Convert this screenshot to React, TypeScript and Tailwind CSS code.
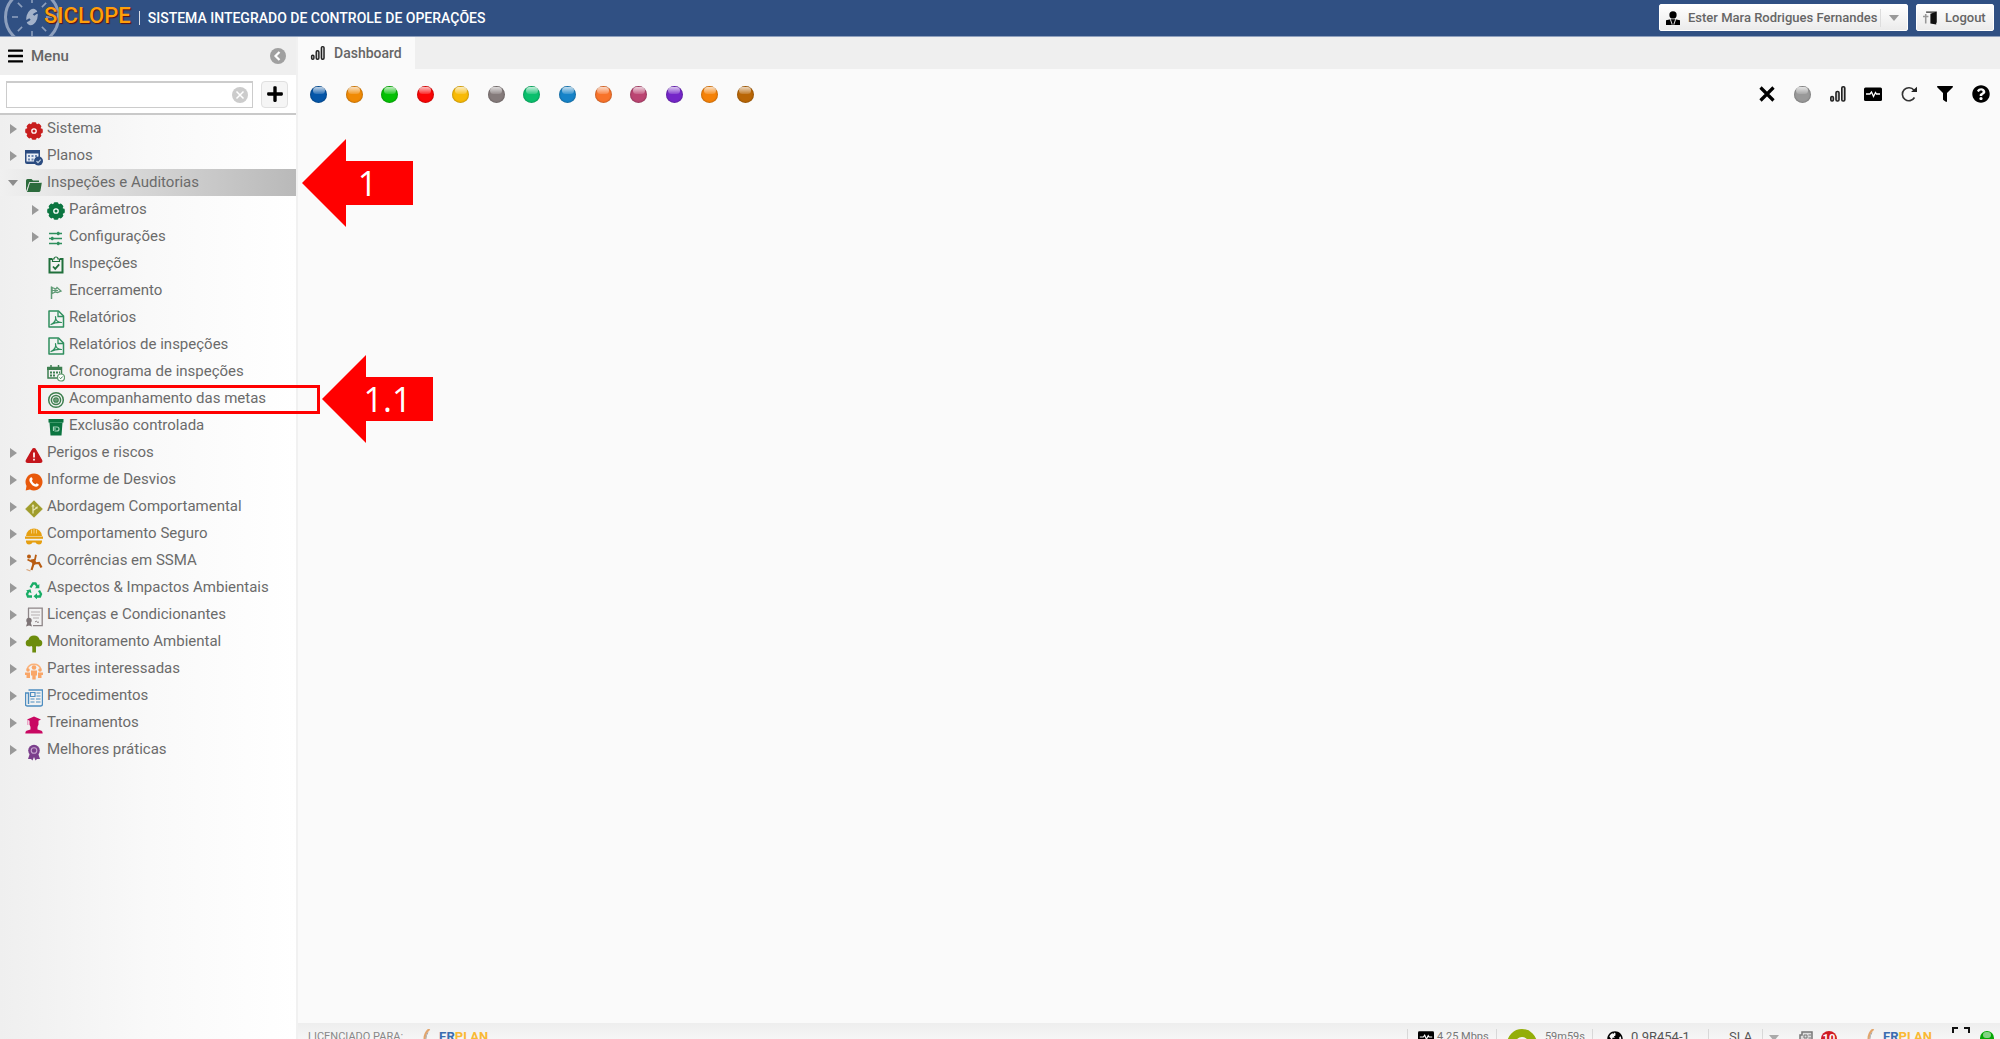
import { type ReactNode } from 'react';
import { FaPlus, FaFilter, FaQuestionCircle, FaBars, FaGlobeAmericas } from 'react-icons/fa';

/* ---------- Icons ---------- */

function Icon({ children, className = 'h-[18px] w-[18px]' }: { children: ReactNode; className?: string }) {
  return (
    <svg className={`shrink-0 ${className}`} viewBox="0 0 18 18" fill="none" aria-hidden>
      {children}
    </svg>
  );
}

function GearIcon({ color }: { color: string }) {
  return (
    <Icon>
      <g fill={color}>
        <circle cx="9" cy="9" r="7.4" />
        {[0, 45, 90, 135].map((angle) => (
          <rect key={angle} x="6.6" y="0.2" width="4.8" height="17.6" rx="1.4" transform={`rotate(${angle} 9 9)`} />
        ))}
      </g>
      <circle cx="9" cy="9" r="2.2" stroke="#fff" strokeWidth="1.3" />
    </Icon>
  );
}

function PlansIcon() {
  return (
    <Icon>
      <path d="M0 1h15v14H2a2 2 0 0 1-2-2z" fill="#2b4b80" />
      <path d="M1.5 4.5h12v8h-12z" fill="#e9eef6" />
      <path d="M3 6h2v2H3zM6.5 6h2v2h-2zM10 6h2v2h-2zM3 9.5h2v2H3zM6.5 9.5h2v2h-2z" fill="#6c86b0" />
      <circle cx="13.5" cy="12" r="4.5" fill="#2b4b80" />
      <path d="M11.5 12l1.5 1.6 2.8-3" stroke="#bcd" strokeWidth="1.2" />
    </Icon>
  );
}

function FolderIcon() {
  return (
    <Icon>
      <path d="M1 15.5V4.5Q1 3 2.5 3h4L8 4.5h6V6H4.5z" fill="#2c6b3c" />
      <path d="M2 16L4.8 6.8h12L15.5 14.500q-.3 1.500-1.800 1.500z" fill="#2c6b3c" />
      <path d="M2 15L4.500 6.500h11" stroke="#dcdcdc" strokeWidth=".7" />
    </Icon>
  );
}

function SlidersIcon() {
  return (
    <Icon>
      <g stroke="#2f8f5e" strokeWidth="1.5">
        <path d="M2 4.5h13M2 9.5h13M2 14.5h13" />
      </g>
      <g fill="#2f8f5e">
        <rect x="10" y="2.7" width="2.5" height="3.6" rx="1" />
        <rect x="4" y="7.7" width="2.5" height="3.6" rx="1" />
        <rect x="10" y="12.7" width="2.5" height="3.6" rx="1" />
      </g>
    </Icon>
  );
}

function ClipboardIcon() {
  return (
    <Icon>
      <path d="M5 3H2.5v13.5h13V3H13" stroke="#20703c" strokeWidth="2" />
      <path d="M5.500 5.500h7V3H11a2 2 0 0 0-4 0H5.500z" stroke="#20703c" strokeWidth="1.2" />
      <path d="M6 10.500l2.200 2.300 4-4.500" stroke="#20703c" strokeWidth="1.800" />
    </Icon>
  );
}

function FlagIcon() {
  return (
    <Icon>
      <path d="M4.500 3.500v12.500" stroke="#5f9a75" strokeWidth="1.500" />
      <path d="M5 4.500l4 1.500 1-1.500 4 3.500-3.500 1.500L8.500 9 5 10.500z" stroke="#5f9a75" strokeWidth="1.300" />
      <path d="M5 7.500h6M8 5.500V9" stroke="#5f9a75" />
    </Icon>
  );
}

function PdfIcon() {
  return (
    <Icon>
      <path d="M2 1h9.500L16.500 6v11h-14.500z" stroke="#2f8f5e" strokeWidth="1.500" strokeLinejoin="round" />
      <path d="M11 1.500V6.500h5" stroke="#2f8f5e" strokeWidth="1.300" />
      <path d="M4 14.500c4-2 5-5.500 4.500-8 0 4 2.500 6 6 6-3-.5-6.500 0-10.500 2z" stroke="#2f8f5e" strokeWidth="1.200" strokeLinejoin="round" />
    </Icon>
  );
}

function CalendarIcon() {
  return (
    <Icon>
      <path d="M1 3.500h13.500v10.500H1z" stroke="#3d7f50" strokeWidth="1.500" />
      <path d="M0 3h15v3H0z" fill="#3d7f50" />
      <path d="M4 1v3M11.500 1v3" stroke="#3d7f50" strokeWidth="1.500" />
      <path d="M3 8.500h10M3 11.500h6" stroke="#3d7f50" strokeWidth="1.800" strokeDasharray="2 1" />
      <circle cx="14" cy="13.500" r="3.500" fill="#fff" stroke="#5f9a6d" strokeWidth="1.200" />
      <path d="M12.500 13.500l1.200 1.200 2-2.200" stroke="#3d7f50" />
    </Icon>
  );
}

function TargetIcon() {
  return (
    <Icon>
      <g stroke="#3f8050" strokeWidth="1.500">
        <circle cx="9" cy="9" r="7.300" />
        <circle cx="9" cy="9" r="4.600" />
        <circle cx="9" cy="9" r="2.100" />
      </g>
      <circle cx="9" cy="9" r="1" fill="#3f8050" />
    </Icon>
  );
}

function BinIcon() {
  return (
    <Icon>
      <path d="M1.500 1h15v3.500h-1L14.500 17.500h-11l-1-13h-1z" fill="#0b7540" />
      <path d="M3 4.500h12" stroke="#4aa275" strokeWidth=".8" />
      <path d="M6.500 13V9h3.500a2 2 0 0 1 0 4H7.500M9 11H6" stroke="#a8d6bd" strokeWidth="1.200" />
    </Icon>
  );
}

function WarningIcon() {
  return (
    <Icon>
      <path d="M9 2.800q1 0 1.500 1l6 10.500q.8 2-1.500 2H3q-2.300 0-1.500-2l6-10.500q.5-1 1.500-1z" fill="#c4161c" stroke="#c4161c" strokeWidth="1.500" strokeLinejoin="round" />
      <path d="M9 6.500v5M9 12.800v1.800" stroke="#fff" strokeWidth="1.700" />
    </Icon>
  );
}

function PhoneIcon() {
  return (
    <Icon>
      <path d="M9 .5a8.500 8.500 0 1 1-4 16L.7 17.500 1.500 13A8.500 8.500 0 0 1 9 .5z" fill="#e8590c" />
      <path d="M5.300 4.800c1-1 1.700-.5 2.200 1 .5 1.200-.8 1.600-.5 2.200.8 1.500 1.800 2.500 3.200 3.200.7.300 1-1.100 1.900-.8 1.700.7 2.200 1.200 1.200 2.300-2 2-4.800.6-6.600-1.300-2-2-3.300-4.700-1.400-6.600z" fill="#fff" />
    </Icon>
  );
}

function DiamondIcon() {
  return (
    <Icon>
      <path d="M9 .8L17.300 9 9 17.200.7 9z" fill="#a09d2c" stroke="#a09d2c" strokeLinejoin="round" />
      <path d="M8 13.500V5.500M8 10.500l3.500-2.500" stroke="#e6e4b0" strokeWidth="1.300" />
      <path d="M6.300 6.500L8 4l1.700 2.500zM10 7l3-.5-.8 2.800z" fill="#e6e4b0" />
    </Icon>
  );
}

function HelmetIcon() {
  return (
    <Icon>
      <path d="M1 9a8 7.500 0 0 1 16 0z" fill="#e69f10" />
      <path d="M6.500 2.500v4M9 1.500v5M11.500 2.500v4" stroke="#f7d58a" strokeWidth=".9" />
      <path d="M0 9.500h18v2.300H0z" fill="#e69f10" />
      <path d="M1 13.500h16v1.500q-.5 2.500-3 2.500-2.500 0-3.500-2h-3q-1 2-3.500 2T1 15z" fill="#e69f10" />
    </Icon>
  );
}

function FallingIcon() {
  return (
    <Icon>
      <circle cx="4" cy="2.500" r="2" fill="#b85c12" />
      <path d="M2.500 5.500L6.500 7.500 10 5.500 11 .8" stroke="#b85c12" strokeWidth="1.800" />
      <path d="M5.500 5.500l4.500-.5 1.500 4.500-3.500 2z" fill="#b85c12" />
      <path d="M8.500 10L6.500 16M9 9.500l5-.5 2.500 4.500" stroke="#b85c12" strokeWidth="2.200" />
      <path d="M1.500 15.500l4 1.500" stroke="#d9a57a" strokeWidth="1.300" />
    </Icon>
  );
}

function RecycleIcon() {
  return (
    <Icon>
      <g stroke="#18ad66" strokeWidth="2.300" fill="none">
        <path d="M5.500 6.500L8 2.500h2.500l2 3.500" />
        <path d="M14 9.500l2 3.500-1 2.500h-4.500" />
        <path d="M7 15.500H3L2 13l2-3.500" />
      </g>
      <g fill="#18ad66">
        <path d="M9.800 7.300h4.500V3z" />
        <path d="M12 12.300v6l-3.500-3z" />
        <path d="M1 9.500l4.500-1.300 1 4z" />
      </g>
    </Icon>
  );
}

function LicenseIcon() {
  return (
    <Icon className="h-5 w-[18px]">
      <path d="M3.500 0v11M3 .2h14.200v17.500H8" stroke="#8d8587" strokeWidth="1.300" />
      <path d="M6 4h9M6 7h9M8 10h6" stroke="#b5afb0" strokeWidth="1" />
      <path d="M10 14l1.500-1 1 1.500 1.500-.5" stroke="#8d8587" />
      <circle cx="4" cy="12.500" r="2.700" fill="#7d7476" />
      <path d="M2.500 14L1 18.500l3-1 3 1L5.500 14z" fill="#7d7476" />
    </Icon>
  );
}

function TreeIcon() {
  return (
    <Icon>
      <g fill="#6c8c0c">
        <ellipse cx="9" cy="5" rx="5.500" ry="4.500" />
        <ellipse cx="4.500" cy="8" rx="3.800" ry="3.500" />
        <ellipse cx="13.500" cy="8" rx="3.800" ry="3.500" />
        <path d="M5 8h8l-2 4v5.500H7.300V12z" />
      </g>
    </Icon>
  );
}

function PeopleIcon() {
  return (
    <Icon>
      <path d="M2 7.500a7.300 7.300 0 0 1 14 0" stroke="#fbb27a" strokeWidth="1.500" />
      <g fill="#f9a668">
        <circle cx="9" cy="5.500" r="2.300" />
        <path d="M6 8.500h6v5h-1.300V17.500H7.300v-4H6z" />
        <circle cx="3" cy="8" r="1.800" />
        <circle cx="15" cy="8" r="1.800" />
        <path d="M0 10.500h5V16H1.500v-3H0zM13 10.500h5v2.500h-1.500v3H13z" />
      </g>
    </Icon>
  );
}

function NewspaperIcon() {
  return (
    <Icon>
      <path d="M3.500 1h14v14q0 2-2 2h-13q-2 0-2-2V4h3v11" stroke="#4d8dc0" strokeWidth="1.400" />
      <path d="M5.500 3.500h4.500v4H5.500z" stroke="#4d8dc0" strokeWidth="1.200" />
      <path d="M11.500 4h4M11.500 7h4M5.500 10h4M11 10h4.500M5.500 13h4M11 13h4.500" stroke="#4d8dc0" strokeWidth="1.200" />
    </Icon>
  );
}

function GraduateIcon() {
  return (
    <Icon>
      <g fill="#c90862">
        <path d="M9 .5l7 3-2.500 1.300v4q-1 3-4.500 3t-4.500-3v-4L2 3.500z" />
        <path d="M5.500 9.500h7v4l4 1.200q1.200.5 1.200 2.800H.3q0-2.300 1.200-2.800l4-1.200z" />
      </g>
      <path d="M2.800 4v5" stroke="#e889b5" />
    </Icon>
  );
}

function MedalIcon() {
  return (
    <Icon>
      <path d="M5 10L3 16h3l1.500 1.500L9 14l1.500 3.500L12 16h3l-2-6z" fill="#7b3f8c" />
      <circle cx="9" cy="7.500" r="5.800" fill="#7b3f8c" />
      <circle cx="9" cy="7.500" r="2.800" stroke="#c7a5d0" strokeWidth="1.100" />
    </Icon>
  );
}

function BarsChartIcon({ className = 'h-[18px] w-[18px]' }: { className?: string }) {
  return (
    <Icon className={className}>
      <g fill="#ccc" stroke="#222" strokeWidth="1.600">
        <rect x="1.800" y="11.500" width="2.600" height="4.500" rx="1.200" />
        <rect x="7" y="6.500" width="3" height="9.500" rx="1.300" />
        <rect x="12.800" y="1.800" width="3" height="14.200" rx="1.300" />
      </g>
    </Icon>
  );
}

function PulseIcon({ className = 'h-[18px] w-[18px]' }: { className?: string }) {
  return (
    <Icon className={className}>
      <rect x="0" y="2.500" width="18" height="13.500" rx="1.500" fill="#000" />
      <path d="M2 9h4l1.500-2 2 4.500 2-4 1 1.500H16" stroke="#fff" strokeWidth="1.300" />
    </Icon>
  );
}

function CrossIcon() {
  return (
    <Icon>
      <path d="M2.500 2.500l13 13M15.500 2.500l-13 13" stroke="#000" strokeWidth="3.200" />
    </Icon>
  );
}

function RefreshIcon() {
  return (
    <Icon>
      <path d="M14.500 12.500A6.500 6.500 0 1 1 14 5.200" stroke="#333" strokeWidth="1.600" />
      <path d="M11 7h6V1.800z" fill="#222" />
    </Icon>
  );
}

function UserIcon() {
  return (
    <Icon className="h-4 w-3.5">
      <circle cx="9" cy="5" r="4.700" fill="#000" />
      <path d="M0 12l6-1.500h6L18 12v6H0z" fill="#000" />
      <path d="M5.500 10.500L8 17.500M12.500 10.500L10 17.500" stroke="#ddd" strokeWidth="1.300" />
    </Icon>
  );
}

function DoorIcon() {
  return (
    <Icon className="h-4 w-3.5">
      <path d="M4 1.500h13V15" stroke="#333" strokeWidth="1.500" />
      <path d="M9.500 3.500L17 1v16.500l-7.500-1.500z" fill="#111" />
      <path d="M0 7h7M3.500 4v12" stroke="#999" strokeWidth="2" />
    </Icon>
  );
}

function SiclopeLogo() {
  return (
    <svg className="absolute -top-3 left-1 h-[58px] w-[58px]" viewBox="0 0 58 58" fill="none" aria-hidden>
      <g stroke="#8d9fbd">
        <circle cx="28" cy="29" r="26.500" strokeWidth="3" />
        {[0, 45, 90, 135, 180, 225, 270, 315].map((angle) => (
          <path key={angle} d="M28 9v6" strokeWidth="1.600" transform={`rotate(${angle} 28 29)`} />
        ))}
      </g>
      <ellipse cx="28" cy="29" rx="5.500" ry="8.500" fill="#a3b2ca" transform="rotate(18 28 29)" />
      <path d="M38 24.500q-6-.5-8.500 2.500M17 33.500q6 .5 9-2.500" stroke="#305083" strokeWidth="2" />
    </svg>
  );
}

function ErplanLogo() {
  return (
    <span className="flex items-start gap-2 text-[13px] leading-4 font-bold">
      <svg className="h-4 w-2" viewBox="0 0 8 16" fill="none" aria-hidden>
        <path d="M6.500 0Q-1 6 3 16" stroke="#e2a56c" strokeWidth="2.200" />
        <path d="M5 3.500Q1 9 5 16" stroke="#aaa" strokeWidth="1" />
      </svg>
      <span className="text-[#3a6db0]">
        ER<span className="text-[#f9b934]">PLAN</span>
      </span>
    </span>
  );
}

/* ---------- Menu tree ---------- */

type MenuItem = {
  label: string;
  icon: ReactNode;
  children?: MenuItem[];
  leaf?: boolean;
  mark?: string;
  boxed?: boolean;
};

const menu: MenuItem[] = [
  { label: 'Sistema', icon: <GearIcon color="#c81e1e" /> },
  { label: 'Planos', icon: <PlansIcon /> },
  {
    label: 'Inspeções e Auditorias',
    icon: <FolderIcon />,
    mark: '1',
    children: [
      { label: 'Parâmetros', icon: <GearIcon color="#0b7540" /> },
      { label: 'Configurações', icon: <SlidersIcon /> },
      { label: 'Inspeções', icon: <ClipboardIcon />, leaf: true },
      { label: 'Encerramento', icon: <FlagIcon />, leaf: true },
      { label: 'Relatórios', icon: <PdfIcon />, leaf: true },
      { label: 'Relatórios de inspeções', icon: <PdfIcon />, leaf: true },
      { label: 'Cronograma de inspeções', icon: <CalendarIcon />, leaf: true },
      { label: 'Acompanhamento das metas', icon: <TargetIcon />, leaf: true, mark: '1.1', boxed: true },
      { label: 'Exclusão controlada', icon: <BinIcon />, leaf: true },
    ],
  },
  { label: 'Perigos e riscos', icon: <WarningIcon /> },
  { label: 'Informe de Desvios', icon: <PhoneIcon /> },
  { label: 'Abordagem Comportamental', icon: <DiamondIcon /> },
  { label: 'Comportamento Seguro', icon: <HelmetIcon /> },
  { label: 'Ocorrências em SSMA', icon: <FallingIcon /> },
  { label: 'Aspectos & Impactos Ambientais', icon: <RecycleIcon /> },
  { label: 'Licenças e Condicionantes', icon: <LicenseIcon /> },
  { label: 'Monitoramento Ambiental', icon: <TreeIcon /> },
  { label: 'Partes interessadas', icon: <PeopleIcon /> },
  { label: 'Procedimentos', icon: <NewspaperIcon /> },
  { label: 'Treinamentos', icon: <GraduateIcon /> },
  { label: 'Melhores práticas', icon: <MedalIcon /> },
];

function ArrowMark({ text, className }: { text: string; className: string }) {
  return (
    <span className={`absolute -top-[30px] z-20 flex h-[88px] w-[111px] items-center justify-center pl-5 ${className}`}>
      <svg className="absolute inset-0 h-full w-full" viewBox="0 0 111 88" aria-hidden>
        <path d="M0 44L44 0v22h67v44H44v22z" fill="#f00" />
      </svg>
      <span className="relative font-['Open_Sans',sans-serif] text-[34px] leading-10 text-white">{text}</span>
    </span>
  );
}

function TreeRow({ item, nested = false }: { item: MenuItem; nested?: boolean }) {
  const open = Boolean(item.children);
  return (
    <li>
      <div
        className={`relative flex h-[27px] items-center ${nested ? 'pl-8' : 'pl-2.5'} ${
          open ? 'bg-linear-to-r from-[#f0f0f0] to-[#b9b9b9]' : ''
        }`}
      >
        <span className="flex w-[15px] shrink-0">
          {!item.leaf && (
            <button type="button" aria-label={`Expandir ${item.label}`} aria-expanded={open}>
              {open ? (
                <svg className="-ml-0.5 h-2 w-2.5" viewBox="0 0 10 8" aria-hidden>
                  <path d="M0 1h10L5 7z" fill="#8c8c8c" />
                </svg>
              ) : (
                <svg className="h-2.5 w-[7px]" viewBox="0 0 7 10" aria-hidden>
                  <path d="M0 0l7 5-7 5z" fill="#999" />
                </svg>
              )}
            </button>
          )}
        </span>
        <a href="#" className="flex items-center gap-1 whitespace-nowrap">
          <span className={nested ? 'pt-0.5' : 'pt-1'}>{item.icon}</span>
          {item.label}
        </a>
        {item.boxed && <span className="absolute top-0 left-[38px] z-10 h-[29px] w-[282px] border-3 border-[#f00]" />}
        {item.mark && <ArrowMark text={item.mark} className={nested ? 'left-[322px]' : 'left-[302px]'} />}
      </div>
      {item.children && (
        <ul>
          {item.children.map((child) => (
            <TreeRow key={child.label} item={child} nested />
          ))}
        </ul>
      )}
    </li>
  );
}

function Sidebar() {
  return (
    <aside className="relative z-10 flex w-[298px] shrink-0 flex-col border-r-2 border-[#f1f1f1]">
      <div className="flex h-[38px] shrink-0 items-center bg-[#efefef] pr-2.5 pl-2 text-[15px] text-[#666]">
        <FaBars className="mr-2 h-[18px] w-[15px] text-black" />
        <span className="flex-1 font-medium">Menu</span>
        <button type="button" aria-label="Recolher menu">
          <svg className="h-4 w-4" viewBox="0 0 16 16" fill="none" aria-hidden>
            <circle cx="8" cy="8" r="8" fill="#a0a0a0" />
            <path d="M9.500 4L5.500 8l4 4" stroke="#fff" strokeWidth="2.200" />
          </svg>
        </button>
      </div>
      <div className="flex h-10 shrink-0 items-center gap-2 border-b-2 border-[#c9c9c9] bg-white pr-2 pl-1.5">
        <div className="flex h-[27px] flex-1 items-center border border-t-2 border-[#ccc] pr-1 pl-1">
          <input type="text" aria-label="Pesquisar no menu" className="min-w-0 flex-1 outline-none" />
          <button type="button" aria-label="Limpar pesquisa">
            <svg className="h-4 w-4" viewBox="0 0 16 16" fill="none" aria-hidden>
              <circle cx="8" cy="8" r="8" fill="#ccc" />
              <path d="M4.500 4.500l7 7M11.500 4.500l-7 7" stroke="#fff" strokeWidth="1.500" />
            </svg>
          </button>
        </div>
        <button
          type="button"
          aria-label="Adicionar"
          className="flex h-[27px] w-[27px] items-center justify-center rounded-sm border border-[#e0e0e0] bg-[#f5f5f5] text-black"
        >
          <FaPlus className="h-[18px] w-[18px]" />
        </button>
      </div>
      <nav className="min-h-0 flex-1 bg-linear-to-r from-[#efefef] via-[#f9f9f9] to-white text-[15px] text-[#6b6b6b]">
        <ul>
          {menu.map((item) => (
            <TreeRow key={item.label} item={item} />
          ))}
        </ul>
      </nav>
    </aside>
  );
}

/* ---------- Content area ---------- */

const balls = [
  { name: 'Planos', color: 'bg-[#0556a8]' },
  { name: 'Inspeções', color: 'bg-[#f08a05]' },
  { name: 'Perigos', color: 'bg-[#05c005]' },
  { name: 'Desvios', color: 'bg-[#fa0505]' },
  { name: 'Abordagem', color: 'bg-[#f8ba05]' },
  { name: 'Comportamento', color: 'bg-[#857b7b]' },
  { name: 'Ocorrências', color: 'bg-[#0abf6c]' },
  { name: 'Aspectos', color: 'bg-[#1683c8]' },
  { name: 'Licenças', color: 'bg-[#f8732a]' },
  { name: 'Monitoramento', color: 'bg-[#bb4572]' },
  { name: 'Partes', color: 'bg-[#7426c8]' },
  { name: 'Procedimentos', color: 'bg-[#f58208]' },
  { name: 'Treinamentos', color: 'bg-[#b96605]' },
];

function Ball({ name, color }: { name: string; color: string }) {
  return (
    <button
      type="button"
      aria-label={name}
      className={`flex h-[17px] w-[17px] justify-center rounded-full pt-px shadow-[inset_0_0_2px_rgba(0,0,0,0.45)] ${color}`}
    >
      <span className="h-[7px] w-3 rounded-full bg-linear-to-b from-white/75 to-white/15" />
    </button>
  );
}

function Tool({ name, children }: { name: string; children: ReactNode }) {
  return (
    <button type="button" aria-label={name} className="flex h-[18px] w-[18px] items-center justify-center text-black">
      {children}
    </button>
  );
}

function Toolbar() {
  return (
    <div className="flex h-[50px] items-center justify-between pr-2.5 pl-3">
      <div className="flex w-[444px] items-center justify-between">
        {balls.map((ball) => (
          <Ball key={ball.name} {...ball} />
        ))}
      </div>
      <div className="flex w-[232px] items-center justify-between">
        <Tool name="Fechar">
          <CrossIcon />
        </Tool>
        <Ball name="Status" color="bg-[#999]" />
        <Tool name="Indicadores">
          <BarsChartIcon />
        </Tool>
        <Tool name="Monitor">
          <PulseIcon />
        </Tool>
        <Tool name="Atualizar">
          <RefreshIcon />
        </Tool>
        <Tool name="Filtrar">
          <FaFilter className="h-4 w-4" />
        </Tool>
        <Tool name="Ajuda">
          <FaQuestionCircle className="h-[18px] w-[18px]" />
        </Tool>
      </div>
    </div>
  );
}

function Separator() {
  return <span className="h-4 w-px bg-[#d8d8d8]" />;
}

function StatusBar() {
  return (
    <footer className="flex h-4 shrink-0 items-start overflow-hidden bg-linear-to-b from-[#eee] to-[#f6f6f6] pt-1.5 pr-1.5 pl-2.5 text-[11px] leading-4 text-[#777]">
      <span className="text-[#888]">LICENCIADO PARA:</span>
      <span className="ml-5">
        <ErplanLogo />
      </span>
      <div className="ml-auto flex items-start">
        <Separator />
        <span className="ml-2.5 flex w-[78px] items-start gap-[3px] whitespace-nowrap">
          <PulseIcon className="h-4 w-4" />
          4.25 Mbps
        </span>
        <Separator />
        <span className="ml-2.5 flex w-[85px] items-start gap-2">
          <svg className="h-[30px] w-[30px]" viewBox="0 0 30 30" fill="none" aria-hidden>
            <circle cx="15" cy="15" r="11" stroke="#94ae0a" strokeWidth="8" />
          </svg>
          59m59s
        </span>
        <Separator />
        <span className="ml-3.5 flex w-[101px] items-start gap-2 text-[13px] leading-4 text-[#555]">
          <FaGlobeAmericas className="mt-0.5 h-4 w-4 text-black" />
          0.9R454-1
        </span>
        <Separator />
        <button type="button" className="ml-5 flex w-[70px] items-start text-[13px] leading-4 text-[#555]">
          SLA
          <span className="ml-2.5 h-4 w-px bg-[#d8d8d8]" />
          <svg className="mt-1.5 ml-1.5 h-2 w-2.5" viewBox="0 0 10 8" aria-hidden>
            <path d="M0 0h10L5 6z" fill="#aaa" />
          </svg>
        </button>
        <svg className="mt-0.5 h-4 w-3.5" viewBox="0 0 14 16" fill="none" aria-hidden>
          <path d="M3 1h10v14H1V4h2z" fill="#ddd" stroke="#777" strokeWidth="1.500" />
          <path d="M5 4h3v3H5zM9.500 4H12M9.500 7H12M5 10h6" stroke="#777" />
        </svg>
        <span className="mt-0.5 ml-2 h-4 w-4 rounded-full bg-[#cf1c24] text-center text-[11px] leading-4 font-bold text-white">
          10
        </span>
        <span className="ml-[30px]">
          <ErplanLogo />
        </span>
        <button type="button" aria-label="Tela cheia" className="ml-5 text-black">
          <svg className="-mt-0.5 h-[18px] w-[18px]" viewBox="0 0 18 18" fill="none" aria-hidden>
            <path d="M1 6V1h5M12 1h5v5M1 12v5h5M17 12v5h-5" stroke="#111" strokeWidth="2" />
          </svg>
        </button>
        <span className="mt-0.5 ml-2.5 flex h-3.5 w-3.5 justify-center rounded-full bg-[#05a805] pt-px">
          <span className="h-1.5 w-2 rounded-full bg-white/50" />
        </span>
      </div>
    </footer>
  );
}

function Header() {
  return (
    <header className="relative flex h-[37px] shrink-0 items-center overflow-hidden border-b border-[#8fa0bd] bg-[#305083] pr-1.5 pl-11 text-white">
      <SiclopeLogo />
      <span className="relative pb-1 text-[22px] leading-7 font-medium text-[#ff9f0a] [text-shadow:1px_1px_1px_#5c1010]">
        SICLOPE
      </span>
      <span className="mx-2 h-3.5 w-px bg-white/80" />
      <h1 className="text-sm font-medium">SISTEMA INTEGRADO DE CONTROLE DE OPERAÇÕES</h1>
      <div className="ml-auto flex gap-2 pb-px text-[13px] font-medium text-[#666]">
        <button
          type="button"
          className="flex h-[27px] w-[249px] items-center rounded-xs border border-white bg-linear-to-b from-white to-[#ebebeb] pl-1.5"
        >
          <UserIcon />
          <span className="ml-2 flex-1 text-left whitespace-nowrap">Ester Mara Rodrigues Fernandes</span>
          <span className="h-[18px] w-px bg-[#ddd]" />
          <svg className="mx-2 h-1.5 w-2.5" viewBox="0 0 10 6" aria-hidden>
            <path d="M0 0h10L5 6z" fill="#999" />
          </svg>
        </button>
        <button
          type="button"
          className="flex h-[27px] w-[78px] items-center gap-2 rounded-xs border border-white bg-linear-to-b from-white to-[#ebebeb] pl-1.5"
        >
          <DoorIcon />
          Logout
        </button>
      </div>
    </header>
  );
}

export default function App() {
  return (
    <div className="flex h-screen flex-col overflow-hidden bg-[#fafafa] font-[Roboto,sans-serif]">
      <Header />
      <div className="flex min-h-0 flex-1">
        <Sidebar />
        <div className="flex min-w-0 flex-1 flex-col">
          <div className="flex h-8 shrink-0 bg-[#efefef]" role="tablist">
            <button
              type="button"
              role="tab"
              aria-selected="true"
              className="flex w-[117px] items-center gap-2 bg-[#fafafa] pl-3 text-sm font-medium text-[#666]"
            >
              <BarsChartIcon className="h-4 w-4" />
              Dashboard
            </button>
          </div>
          <main className="min-h-0 flex-1">
            <Toolbar />
          </main>
          <StatusBar />
        </div>
      </div>
    </div>
  );
}
